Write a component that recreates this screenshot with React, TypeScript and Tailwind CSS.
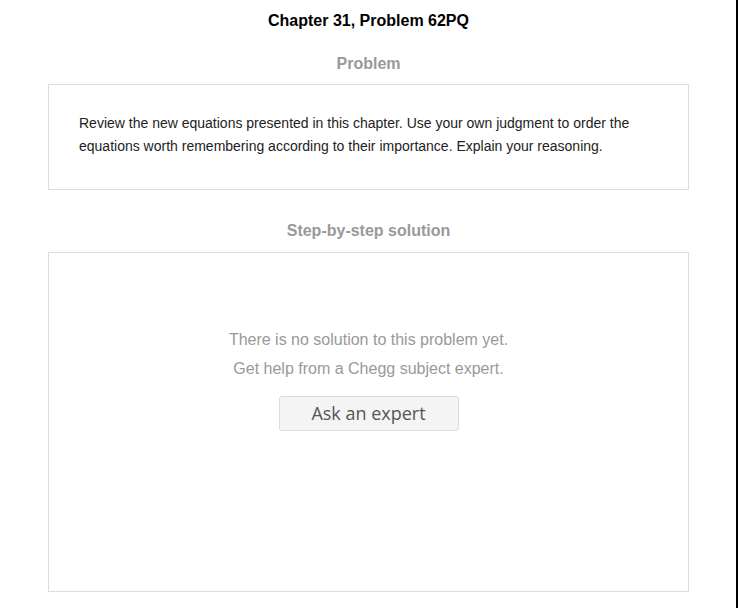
export default function App() {
  return (
    <div className="h-[608px] w-[738px] border-r-2 border-black bg-white font-['Liberation_Sans',Arial,sans-serif]">
      <div className="flex flex-col items-center pl-[48px] pr-[47px] pt-[11px]">
        {/* Heading */}
        <h1 className="text-[16px] font-bold leading-[20px] text-black">
          Chapter 31, Problem 62PQ
        </h1>

        {/* Problem */}
        <h2 className="mt-[23px] text-[16px] font-bold leading-[20px] text-[#999]">
          Problem
        </h2>
        <div className="mt-[10px] w-full border border-[#ddd] px-[30px] pb-[31px] pt-[27px]">
          <p className="text-[14px] leading-[23px] text-[#222]">
            Review the new equations presented in this chapter. Use your own judgment to order the
            equations worth remembering according to their importance. Explain your reasoning.
          </p>
        </div>

        {/* Solution */}
        <h2 className="mt-[31px] text-[16px] font-bold leading-[20px] text-[#999]">
          Step-by-step solution
        </h2>
        <div className="mt-[11px] flex h-[340px] w-full flex-col items-center border border-[#ddd] pt-[72px]">
          <p className="text-[16px] leading-[29px] text-[#999]">
            There is no solution to this problem yet.
          </p>
          <p className="text-[16px] leading-[29px] text-[#999]">
            Get help from a Chegg subject expert.
          </p>
          <button className="mt-[13px] flex h-[35px] w-[180px] items-center justify-center rounded-[3px] border border-[#ddd] bg-[#f4f4f4] font-['Open_Sans',sans-serif] text-[18px] text-[#555]">
            Ask an expert
          </button>
        </div>
      </div>
    </div>
  );
}
